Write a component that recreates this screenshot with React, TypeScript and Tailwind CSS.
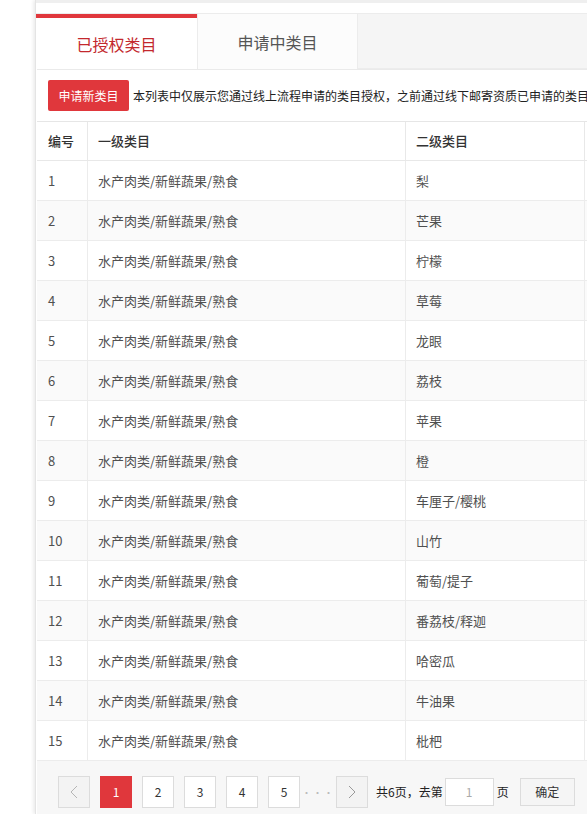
import React from "react";

const rows: string[] = [
  "梨",
  "芒果",
  "柠檬",
  "草莓",
  "龙眼",
  "荔枝",
  "苹果",
  "橙",
  "车厘子/樱桃",
  "山竹",
  "葡萄/提子",
  "番荔枝/释迦",
  "哈密瓜",
  "牛油果",
  "枇杷",
];

function ChevronLeft() {
  return (
    <svg width="8" height="14" viewBox="0 0 8 14" fill="none">
      <path d="M7 1L1 7l6 6" stroke="#b5b5b5" strokeWidth="1" />
    </svg>
  );
}
function ChevronRight() {
  return (
    <svg width="8" height="14" viewBox="0 0 8 14" fill="none">
      <path d="M1 1l6 6-6 6" stroke="#999" strokeWidth="1" />
    </svg>
  );
}

export default function App() {
  const font = { fontFamily: '"Noto Sans CJK SC", "Noto Sans", sans-serif' };
  return (
    <div
      className="w-[587px] h-[814px] overflow-hidden bg-white flex"
      style={font}
    >
      <div className="w-[35px] shrink-0 bg-white" />
      <div className="w-[700px] shrink-0 flex flex-col border-l border-[#e4e4e4] shadow-[-2px_0_3px_rgba(0,0,0,0.07)]">
        <div className="h-[3px] bg-[#efefef]" />
        <div className="h-[10px] bg-white" />
        {/* tabs */}
        <div className="flex h-[56px] border-t border-[#ececec]">
          <div className="w-[161px] bg-white border-t-4 border-[#e0373c] flex items-center justify-center text-[16px] text-[#c3282d]">
            已授权类目
          </div>
          <div className="w-[161px] bg-[#fcfcfc] border-l border-r border-[#ececec] flex items-center justify-center text-[16px] text-[#555]">
            申请中类目
          </div>
          <div className="flex-1 bg-[#f5f5f5] border-b border-[#ececec]" />
        </div>
        {/* panel */}
        <div className="flex-1 bg-white border-t border-[#eaeaea] flex flex-col ml-[1px]">
          <div className="flex items-center pt-[10px] pl-[11px] h-[51px] pb-[10px]">
            <div className="h-[31px] w-[81px] bg-[#e0373c] text-white text-[12px] rounded-[2px] flex items-center justify-center">
              申请新类目
            </div>
            <div className="ml-[4px] text-[12px] text-[#222] whitespace-nowrap">
              本列表中仅展示您通过线上流程申请的类目授权，之前通过线下邮寄资质已申请的类目不在此列表中展示
            </div>
          </div>
          {/* table */}
          <div className="border-t border-[#e6e6e6]">
            <div className="grid grid-cols-[51px_318px_179px_151px] h-[39px] border-b border-[#e8e8e8] text-[13px] text-[#333] font-medium">
              <div className="pl-[11px] flex items-center border-r border-[#e8e8e8]">编号</div>
              <div className="pl-[10px] flex items-center border-r border-[#e8e8e8]">一级类目</div>
              <div className="pl-[10px] flex items-center border-r border-[#e8e8e8]">二级类目</div>
              <div />
            </div>
            {rows.map((name, i) => (
              <div
                key={i}
                className={
                  "grid grid-cols-[51px_318px_179px_151px] h-[40px] border-b border-[#ececec] text-[13px] text-[#505050] " +
                  (i % 2 === 1 ? "bg-[#fafafa]" : "bg-white")
                }
              >
                <div className="pl-[11px] flex items-center border-r border-[#ececec]">{i + 1}</div>
                <div className="pl-[10px] flex items-center border-r border-[#ececec]">水产肉类/新鲜蔬果/熟食</div>
                <div className="pl-[10px] flex items-center border-r border-[#ececec]">{name}</div>
                <div />
              </div>
            ))}
          </div>
          {/* pagination */}
          <div className="flex-1 bg-[#f7f7f7] pt-[15px] pl-[21px]">
            <div className="flex items-center text-[12px]">
              <div className="w-[32px] h-[32px] border border-[#dcdcdc] bg-[#f3f3f3] flex items-center justify-center">
                <ChevronLeft />
              </div>
              <div className="ml-[10px] w-[32px] h-[32px] bg-[#e0373c] text-white flex items-center justify-center">1</div>
              {["2", "3", "4", "5"].map((p) => (
                <div
                  key={p}
                  className="ml-[10px] w-[32px] h-[32px] border border-[#dcdcdc] bg-white text-[#333] flex items-center justify-center"
                >
                  {p}
                </div>
              ))}
              <div className="w-[36px] h-[32px] flex items-center justify-center text-[#bbb] text-[10px] tracking-[1px]">···</div>
              <div className="w-[32px] h-[32px] border border-[#dcdcdc] bg-[#f3f3f3] flex items-center justify-center">
                <ChevronRight />
              </div>
              <div className="ml-[8px] text-[#222]">共6页，去第</div>
              <div className="ml-[2px] w-[49px] h-[28px] border border-[#dcdcdc] bg-white text-[#aaa] flex items-center justify-center">1</div>
              <div className="ml-[3px] text-[#222]">页</div>
              <div className="ml-[11px] w-[55px] h-[28px] border border-[#dcdcdc] bg-[#f5f5f5] text-[#333] flex items-center justify-center">确定</div>
            </div>
          </div>
        </div>
      </div>
    </div>
  );
}
